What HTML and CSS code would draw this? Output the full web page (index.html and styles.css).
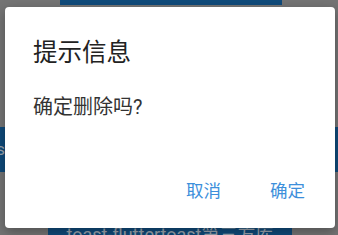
FILE: index.html
```html
<!DOCTYPE html>
<html lang="zh">
<head>
  <meta charset="UTF-8">
  <meta name="viewport" content="width=device-width, initial-scale=1.0">
  <title>提示信息</title>
  <link rel="stylesheet" href="styles.css">
</head>
<body>
  <div class="page">
    <div class="btn btn-top"></div>
    <div class="wide-bar">toast</div>
    <div class="btn btn-bottom">toast-fluttertoast第三方库</div>
  </div>

  <div class="dialog">
    <h2 class="dialog-title">提示信息</h2>
    <p class="dialog-body">确定删除吗?</p>
    <div class="dialog-actions">
      <button class="action">取消</button>
      <button class="action">确定</button>
    </div>
  </div>
</body>
</html>
```

FILE: styles.css
```css
/* page under a dark scrim, colours already dimmed */
body {
  margin: 0;
  width: 338px;
  height: 235px;
  overflow: hidden;
  background: #747474;
  font-family: Roboto, "Noto Sans CJK SC", sans-serif;
  position: relative;
}

.page {
  display: flex;
  flex-direction: column;
}

.btn {
  background: #0f4a7a;
  color: #9aa3ad;
  text-align: center;
  overflow: hidden;
}
.btn-top {
  margin-left: 60px;
  width: 222px;
  height: 5px;
}
.wide-bar {
  margin-top: 122px;
  height: 45px;
  background: #0f4a7a;
  color: #9aa3ad;
  font-size: 17px;
  line-height: 45px;
  text-indent: -28px;
  overflow: hidden;
}
.btn-bottom {
  margin-top: 53px;
  margin-left: 48px;
  width: 244px;
  height: 15px;
  font-size: 18px;
  line-height: 20px;
  white-space: nowrap;
}

.dialog {
  position: absolute;
  left: 5px;
  top: 7px;
  width: 330px;
  height: 221px;
  background: #fff;
  border-radius: 4px;
  box-shadow: 0 4px 12px rgba(0, 0, 0, 0.3);
  display: flex;
  flex-direction: column;
  box-sizing: border-box;
  padding: 30px 0 0 28px;
}

.dialog-title {
  margin: 0;
  font-size: 24.5px;
  font-weight: 400;
  line-height: 32px;
  color: #222;
}

.dialog-body {
  margin: 24px 0 0;
  font-size: 20px;
  line-height: 28px;
  color: #333;
}

.dialog-actions {
  margin-top: auto;
  margin-bottom: 25px;
  display: flex;
  justify-content: flex-end;
  gap: 17px;
  padding-right: 14px;
}

.action {
  border: 0;
  background: none;
  padding: 0 16px;
  font-family: inherit;
  font-size: 17.5px;
  line-height: 24px;
  color: #3d8fdb;
}
```
